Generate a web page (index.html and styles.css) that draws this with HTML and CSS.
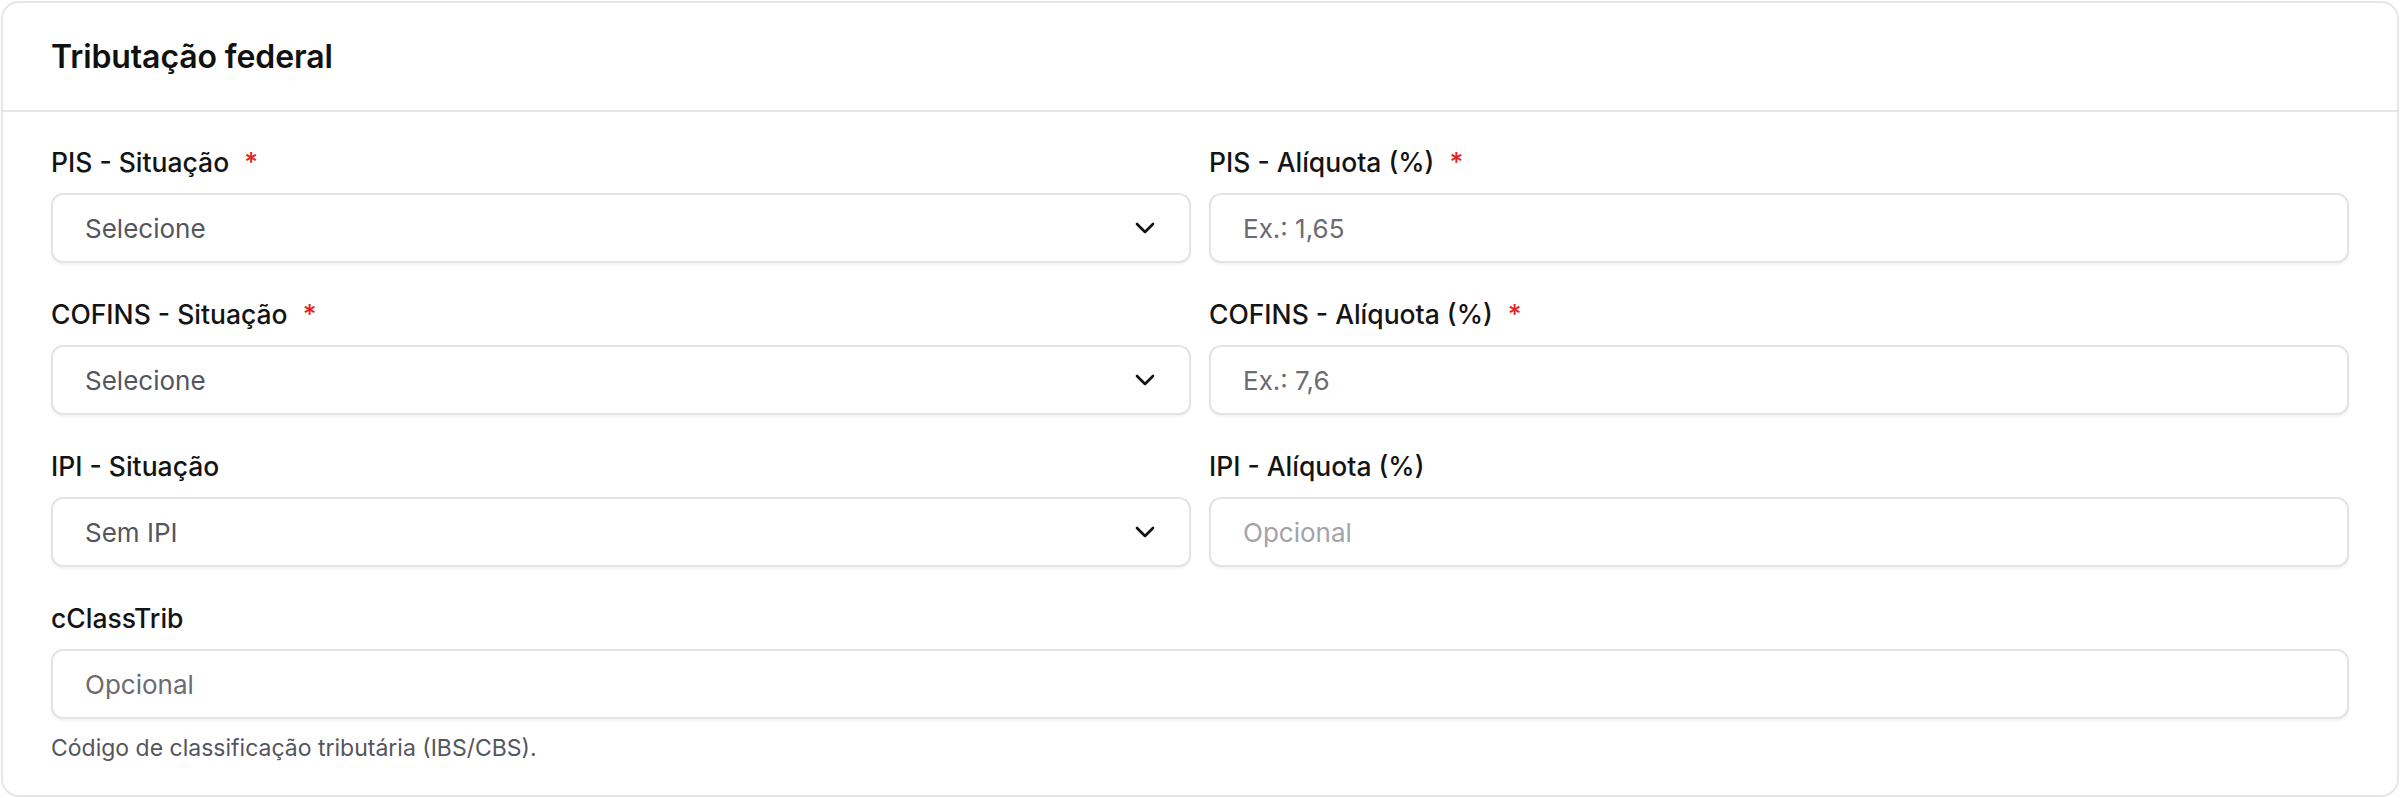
FILE: index.html
```html
<!DOCTYPE html>
<html lang="pt-BR">
<head>
    <meta charset="UTF-8">
    <meta name="viewport" content="width=device-width, initial-scale=1.0">
    <title>Tributação federal</title>
    <link rel="stylesheet" href="styles.css">
</head>
<body>
    <section class="card">
        <header class="card-header">
            <h2>Tributação federal</h2>
        </header>

        <div class="card-body">
            <div class="form-grid">
                <div class="form-group">
                    <label for="pis_cst">PIS - Situação <span class="req">*</span></label>
                    <div class="select-wrap">
                        <select id="pis_cst" name="pis_cst" required>
                            <option value="">Selecione</option>
                        </select>
                        <svg class="chevron" viewBox="0 0 20 12" width="20" height="12" aria-hidden="true">
                            <path d="M2 2l8 8 8-8" />
                        </svg>
                    </div>
                </div>
                <div class="form-group">
                    <label for="pis_aliq">PIS - Alíquota (%) <span class="req">*</span></label>
                    <input type="text" id="pis_aliq" name="pis_aliq" placeholder="Ex.: 1,65" required>
                </div>

                <div class="form-group">
                    <label for="cofins_cst">COFINS - Situação <span class="req">*</span></label>
                    <div class="select-wrap">
                        <select id="cofins_cst" name="cofins_cst" required>
                            <option value="">Selecione</option>
                        </select>
                        <svg class="chevron" viewBox="0 0 20 12" width="20" height="12" aria-hidden="true">
                            <path d="M2 2l8 8 8-8" />
                        </svg>
                    </div>
                </div>
                <div class="form-group">
                    <label for="cofins_aliq">COFINS - Alíquota (%) <span class="req">*</span></label>
                    <input type="text" id="cofins_aliq" name="cofins_aliq" placeholder="Ex.: 7,6" required>
                </div>

                <div class="form-group">
                    <label for="ipi_cst">IPI - Situação</label>
                    <div class="select-wrap">
                        <select id="ipi_cst" name="ipi_cst">
                            <option value="none">Sem IPI</option>
                        </select>
                        <svg class="chevron" viewBox="0 0 20 12" width="20" height="12" aria-hidden="true">
                            <path d="M2 2l8 8 8-8" />
                        </svg>
                    </div>
                </div>
                <div class="form-group">
                    <label for="ipi_aliq">IPI - Alíquota (%)</label>
                    <input type="text" id="ipi_aliq" name="ipi_aliq" class="optional" placeholder="Opcional" disabled>
                </div>

                <div class="form-group full">
                    <label for="cclasstrib">cClassTrib</label>
                    <input type="text" id="cclasstrib" name="cclasstrib" placeholder="Opcional">
                    <p class="hint">Código de classificação tributária (IBS/CBS).</p>
                </div>
            </div>
        </div>
    </section>
</body>
</html>
```

FILE: styles.css
```css
body {
    font-family: Inter, "Noto Sans", Arial, sans-serif;
    margin: 0;
    padding: 1px;
    background-color: #fff;
    color: #111;
}

.card {
    background-color: #fff;
    border: 2px solid #e6e6e6;
    border-radius: 18px;
    height: 796px;
    box-sizing: border-box;
}

.card-header {
    padding: 0 48px;
    height: 107px;
    display: flex;
    align-items: center;
    border-bottom: 2px solid #e6e6e6;
}

.card-header h2 {
    margin: 0;
    font-size: 32px;
    font-weight: 600;
    color: #111;
    letter-spacing: -0.1px;
}

.card-body {
    padding: 30px 48px;
}

.form-grid {
    display: grid;
    grid-template-columns: 1fr 1fr;
    column-gap: 18px;
    row-gap: 31px;
}

.form-group.full {
    grid-column: 1 / -1;
}

.form-group label {
    display: block;
    font-size: 26.5px;
    font-weight: 500;
    line-height: 40px;
    margin-bottom: 11px;
    color: #141414;
}

.req {
    color: #e02424;
    margin-left: 8px;
}

.form-group input,
.form-group select {
    display: block;
    width: 100%;
    height: 70px;
    padding: 0 32px;
    border: 2px solid #e4e4e4;
    border-radius: 12px;
    box-sizing: border-box;
    background-color: #fff;
    box-shadow: 0 2px 3px rgba(0, 0, 0, 0.05);
    font-family: inherit;
    font-size: 26px;
    color: #55555e;
    outline: none;
}

.form-group select {
    appearance: none;
    -webkit-appearance: none;
}

.form-group input::placeholder {
    color: #6b6b74;
}

.form-group input.optional::placeholder {
    color: #a3a3ab;
}

.select-wrap {
    position: relative;
}

.chevron {
    position: absolute;
    right: 36px;
    top: 29px;
    fill: none;
    stroke: #111;
    stroke-width: 2.6;
    stroke-linecap: round;
    stroke-linejoin: round;
    pointer-events: none;
}

.hint {
    margin: 13px 0 0;
    font-size: 23px;
    line-height: 32px;
    color: #55555e;
}
```
